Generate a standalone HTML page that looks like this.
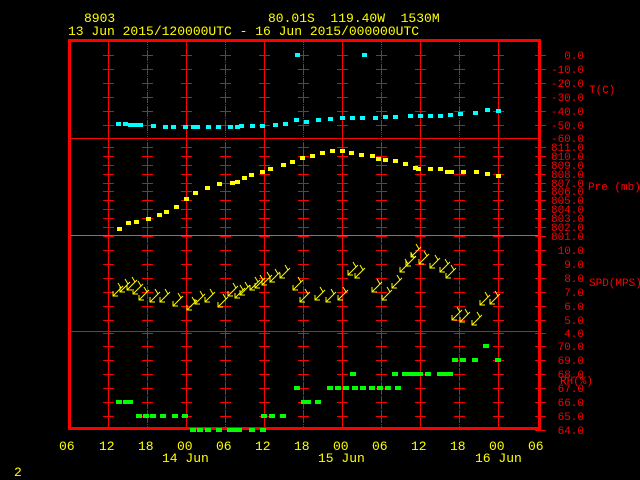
<!DOCTYPE html>
<html><head><meta charset="utf-8"><style>
html,body{margin:0;padding:0;background:#000;width:640px;height:480px;overflow:hidden}
svg{display:block}
text{font-family:"Liberation Mono",monospace;font-size:13px;white-space:pre}
.y{fill:#ffff00}.r{fill:#ff0000}
.s text{font-size:11px}
</style></head><body>
<svg id="s" width="640" height="480" xmlns="http://www.w3.org/2000/svg" xml:space="preserve">
<g id="g"></g>
<text class="y" x="84" y="22">8903</text>
<text class="y" x="268" y="22">80.01S  119.40W  1530M</text>
<text class="y" x="68" y="35">13 Jun 2015/120000UTC - 16 Jun 2015/000000UTC</text>
<g class="r s" text-anchor="end">
<text x="584" y="59">0.0</text><text x="584" y="73">-10.0</text><text x="584" y="87">-20.0</text><text x="584" y="101">-30.0</text><text x="584" y="115">-40.0</text><text x="584" y="129">-50.0</text><text x="584" y="142">-60.0</text>
<text x="584" y="151">811.0</text><text x="584" y="160">810.0</text><text x="584" y="169">809.0</text><text x="584" y="178">808.0</text><text x="584" y="187">807.0</text><text x="584" y="195">806.0</text><text x="584" y="204">805.0</text><text x="584" y="213">804.0</text><text x="584" y="222">803.0</text><text x="584" y="231">802.0</text><text x="584" y="240">801.0</text>
<text x="584" y="254">10.0</text><text x="584" y="268">9.0</text><text x="584" y="282">8.0</text><text x="584" y="296">7.0</text><text x="584" y="310">6.0</text><text x="584" y="324">5.0</text><text x="584" y="337">4.0</text>
<text x="584" y="350">70.0</text><text x="584" y="364">69.0</text><text x="584" y="378">68.0</text><text x="584" y="392">67.0</text><text x="584" y="406">66.0</text><text x="584" y="420">65.0</text><text x="584" y="434">64.0</text>
</g>
<g class="r s">
<text x="589" y="93">T(C)</text><text x="588" y="190">Pre (mb)</text><text x="589" y="286">SPD(MPS)</text><text x="560" y="384">RH(%)</text>
</g>
<g class="y">
<text x="59" y="450">06</text><text x="99" y="450">12</text><text x="138" y="450">18</text><text x="177" y="450">00</text><text x="216" y="450">06</text><text x="255" y="450">12</text><text x="294" y="450">18</text><text x="333" y="450">00</text><text x="372" y="450">06</text><text x="411" y="450">12</text><text x="450" y="450">18</text><text x="489" y="450">00</text><text x="528" y="450">06</text>
<text x="162" y="462">14 Jun</text><text x="318" y="462">15 Jun</text><text x="475" y="462">16 Jun</text>
<text x="14" y="476">2</text>
</g>
</svg>
<script>
var g=document.getElementById('g'),h='';
function L(x1,y1,x2,y2,c,w){h+='<line x1="'+x1+'" y1="'+y1+'" x2="'+x2+'" y2="'+y2+'" stroke="'+c+'" stroke-width="'+(w||1)+'"/>';}
function R(x,y,w,hh,c){h+='<rect x="'+x+'" y="'+y+'" width="'+w+'" height="'+hh+'" fill="'+c+'"/>';}
var ys=[55,69,83,97,111,125,147,156,165,174,183,191,200,209,218,227,236,250,264,278,292,306,320,333,346,360,374,388,402,416,430];
for(var i=1;i<=11;i++){var x=69+39*i;
 if(i%2==1)L(x+.5,40,x+.5,428,'#ff0000');else for(var y=42;y<428;y+=2)R(x,y,1,1,'#ff0000');
 ys.forEach(function(y){if(y<430){L(x-5,y+.5,x+6,y+.5,'#ff0000');L(x+.5,y-5,x+.5,y+6,'#ff0000');}});}
ys.forEach(function(y){L(535,y+.5,546,y+.5,'#ff0000');});
L(69,138.5,540,138.5,'#ff0000');L(69,235.5,540,235.5,'#777');L(69,331.5,540,331.5,'#ff0000');
R(68,39,473,3,'#ff0000');R(68,427,473,3,'#ff0000');R(68,39,3,391,'#ff0000');R(538,39,3,391,'#ff0000');
var T=[[297,55],[364,55],[118,124],[125,124],[130,125],[135,125],[140,125],[153,126],[165,127],[173,127],[185,127],[193,127],[197,127],[208,127],[218,127],[230,127],[237,127],[241,126],[252,126],[262,126],[275,125],[285,124],[296,120],[306,122],[318,120],[330,119],[342,118],[352,118],[362,118],[375,118],[385,117],[395,117],[410,116],[420,116],[430,116],[440,116],[450,115],[460,114],[475,113],[487,110],[498,111]];
T.forEach(function(p){R(p[0]-2,p[1]-2,5,4,'#00ffff');});
var P=[[119,229],[128,223],[136,222],[148,219],[159,215],[166,212],[176,207],[186,199],[195,193],[207,188],[219,184],[232,183],[237,182],[244,178],[251,175],[262,172],[270,169],[283,165],[292,162],[302,158],[312,156],[322,153],[332,151],[342,151],[351,153],[361,155],[372,156],[378,159],[385,160],[395,161],[405,164],[415,168],[418,169],[430,169],[440,169],[447,172],[451,172],[463,172],[476,172],[487,174],[498,176]];
P.forEach(function(p){R(p[0]-2,p[1]-2,5,4,'#ffff00');});
var W=[[113,296],[120,292],[127,290],[133,294],[139,300],[150,302],[160,302],[173,306],[187,310],[195,304],[205,302],[218,307],[228,296],[235,298],[240,295],[250,290],[255,288],[262,285],[270,282],[280,278],[293,290],[300,302],[315,300],[326,302],[338,300],[348,275],[355,278],[372,292],[382,300],[392,288],[400,272],[406,266],[411,257],[419,264],[430,268],[440,272],[446,278],[452,320],[460,322],[472,325],[480,305],[490,304]];
W.forEach(function(p){var x=p[0],y=p[1];
 h+='<polyline points="'+(x+10)+','+(y-10)+' '+x+','+y+'" stroke="#ffff00" fill="none"/>';
 h+='<polyline points="'+x+','+(y-5)+' '+x+','+y+' '+(x+5)+','+y+'" stroke="#ffff00" fill="none"/>';
 h+='<line x1="'+(x+8)+'" y1="'+(y-8)+'" x2="'+(x+5)+'" y2="'+(y-13)+'" stroke="#ffff00"/>';});
var G=[[119,402],[126,402],[130,402],[139,416],[146,416],[153,416],[163,416],[175,416],[185,416],[193,430],[200,430],[208,430],[219,430],[230,430],[234,430],[239,430],[252,430],[263,430],[264,416],[272,416],[283,416],[297,388],[304,402],[308,402],[318,402],[330,388],[338,388],[346,388],[353,374],[355,388],[363,388],[372,388],[380,388],[388,388],[395,374],[398,388],[405,374],[410,374],[415,374],[420,374],[428,374],[440,374],[445,374],[450,374],[455,360],[463,360],[475,360],[486,346],[498,360]];
G.forEach(function(p){R(p[0]-3,p[1]-2,6,4,'#00ff00');});
g.innerHTML=h;
</script>
</body></html>
